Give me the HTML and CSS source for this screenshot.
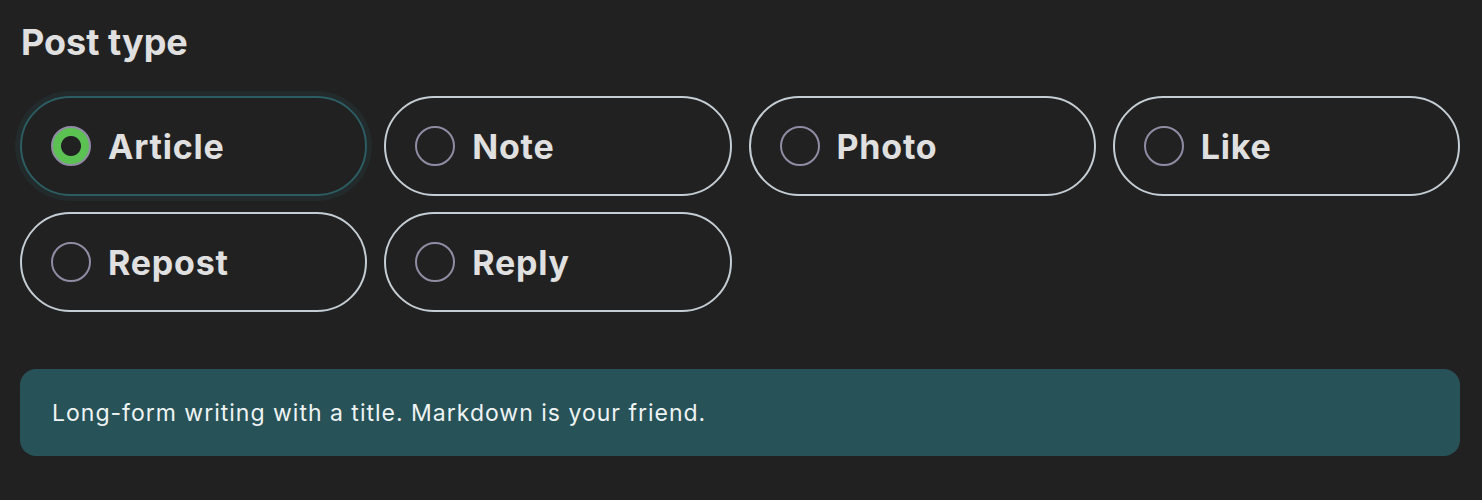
FILE: index.html
```html
<!DOCTYPE html>
<html lang="en">
<head>
<meta charset="utf-8">
<title>Post type</title>
<link rel="stylesheet" href="styles.css">
</head>
<body>
<main class="page">
  <h2 class="title">Post type</h2>
  <div class="options">
    <label class="option is-selected"><input type="radio" name="type" checked><span>Article</span></label>
    <label class="option"><input type="radio" name="type"><span>Note</span></label>
    <label class="option"><input type="radio" name="type"><span>Photo</span></label>
    <label class="option"><input type="radio" name="type"><span>Like</span></label>
    <label class="option"><input type="radio" name="type"><span>Repost</span></label>
    <label class="option"><input type="radio" name="type"><span>Reply</span></label>
  </div>
  <div class="hint">Long-form writing with a title. Markdown is your friend.</div>
</main>
</body>
</html>
```

FILE: styles.css
```css
html, body {
  margin: 0;
  background: #212121;
}
body {
  font-family: Inter, "Noto Sans", sans-serif;
  color: #e0e0e0;
}
.page {
  padding: 20px 22px 0 20px;
}
.title {
  margin: 0 0 0 1px;
  font-size: 36px;
  line-height: 44px;
  font-weight: 700;
  color: #e0e0e0;
}
.options {
  margin-top: 32px;
  display: grid;
  grid-template-columns: repeat(4, 1fr);
  column-gap: 17px;
  row-gap: 16px;
}
.option {
  box-sizing: border-box;
  height: 100px;
  border: 2px solid #c3cdd3;
  border-radius: 50px;
  display: flex;
  align-items: center;
  gap: 17px;
  padding-left: 29px;
  font-size: 34px;
  letter-spacing: 0.8px;
  font-weight: 700;
  color: #e0e0e0;
}
.option.is-selected {
  border-color: #2b5d62;
  box-shadow: 0 0 0 5px #232a2b;
}
.option input {
  appearance: none;
  -webkit-appearance: none;
  margin: 0;
  width: 40px;
  height: 40px;
  box-sizing: border-box;
  border: 2px solid #8f8ca3;
  border-radius: 50%;
  background: transparent;
  flex: none;
}
.option input:checked {
  background: radial-gradient(circle, #212121 0 9.5px, #5bc152 10.5px);
}
.hint {
  margin-top: 57px;
  background: #275258;
  border-radius: 16px;
  height: 87px;
  box-sizing: border-box;
  display: flex;
  align-items: center;
  padding-left: 32px;
  font-size: 23px;
  letter-spacing: 1px;
  color: #eef3f3;
}
```
